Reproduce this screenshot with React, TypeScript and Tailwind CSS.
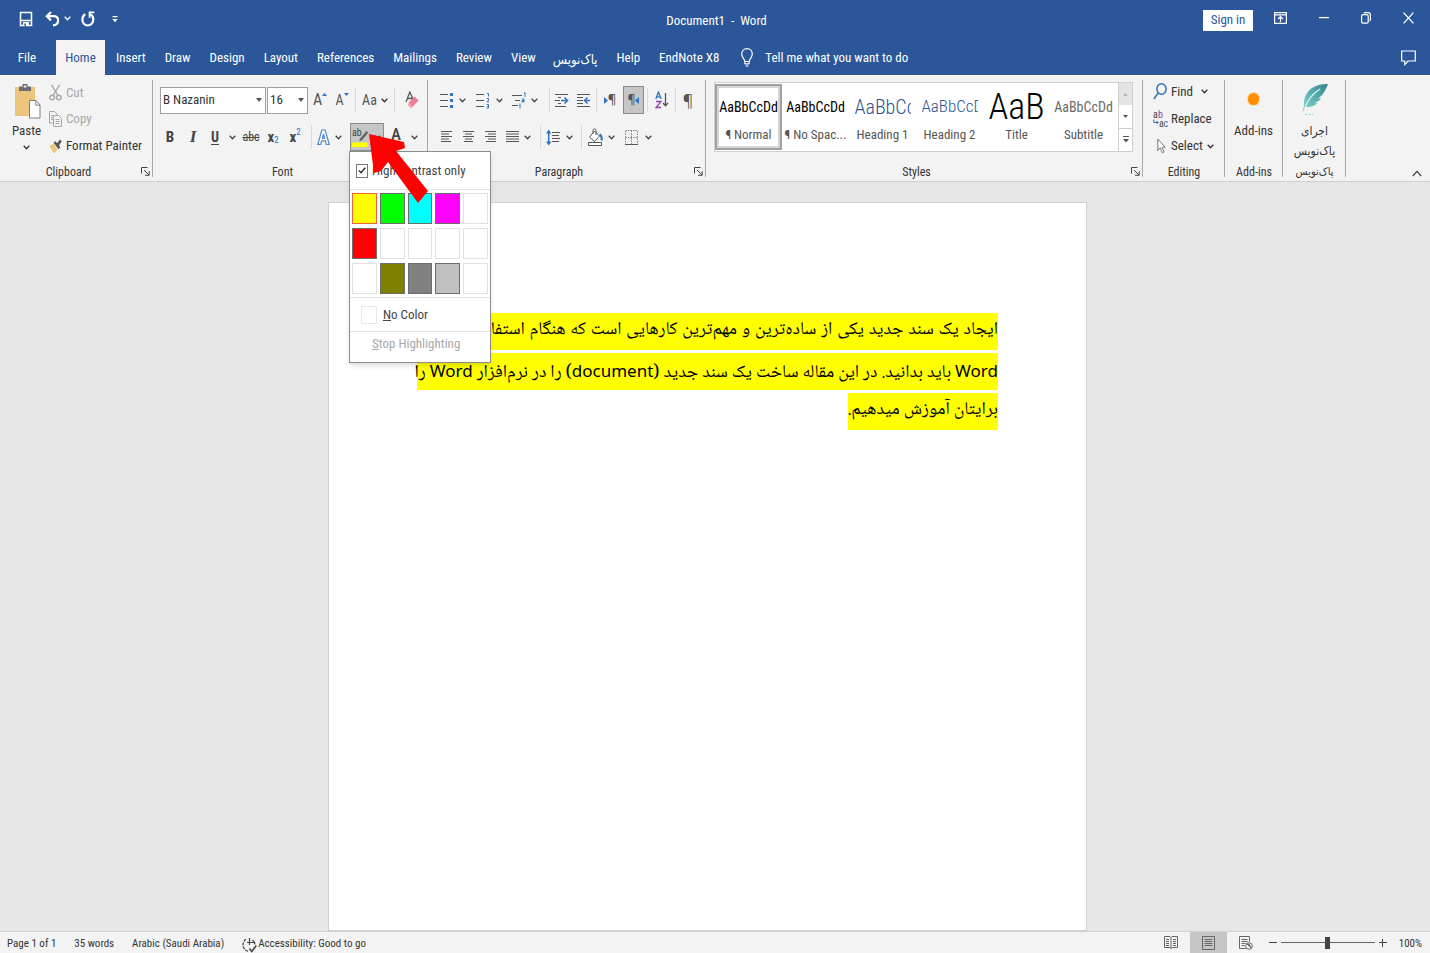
import type { ReactNode } from 'react'
import { useState } from 'react'

const tabsBefore = ['Insert', 'Draw', 'Design', 'Layout', 'References', 'Mailings', 'Review', 'View']
const tabsAfter = ['Help', 'EndNote X8']

const swatches = [
  { name: 'Yellow', color: '#ffff00', border: '#f0643c' },
  { name: 'Bright Green', color: '#00ff00', border: '#6e6e6e' },
  { name: 'Turquoise', color: '#00ffff', border: '#6e6e6e' },
  { name: 'Pink', color: '#ff00ff', border: '#6e6e6e' },
  { name: 'Blue', color: '#ffffff', border: '#e1e1e1' },
  { name: 'Red', color: '#ff0000', border: '#6e6e6e' },
  { name: 'Dark Blue', color: '#ffffff', border: '#e1e1e1' },
  { name: 'Teal', color: '#ffffff', border: '#e1e1e1' },
  { name: 'Green', color: '#ffffff', border: '#e1e1e1' },
  { name: 'Violet', color: '#ffffff', border: '#e1e1e1' },
  { name: 'Dark Red', color: '#ffffff', border: '#e1e1e1' },
  { name: 'Dark Yellow', color: '#808000', border: '#6e6e6e' },
  { name: 'Gray-50%', color: '#808080', border: '#6e6e6e' },
  { name: 'Gray-25%', color: '#c0c0c0', border: '#6e6e6e' },
  { name: 'Black', color: '#ffffff', border: '#e1e1e1' },
]

const styles = [
  { label: '¶ Normal', sample: 'AaBbCcDd', cls: 'w-full justify-center text-[14px] text-black' },
  { label: '¶ No Spac...', sample: 'AaBbCcDd', cls: 'w-full justify-center text-[14px] text-black' },
  { label: 'Heading 1', sample: 'AaBbCc', cls: 'w-14 text-[20px] font-light text-[#2f5496]' },
  { label: 'Heading 2', sample: 'AaBbCcD', cls: 'w-14 text-[17px] font-light text-[#2f5496]' },
  { label: 'Title', sample: 'AaB', cls: 'w-full justify-center text-[36px] leading-9 font-light text-black' },
  { label: 'Subtitle', sample: 'AaBbCcDd', cls: 'w-full justify-center text-[14px] text-[#6a6a6a]' },
]

function Chevron() {
  return (
    <svg width="7" height="5" viewBox="0 0 7 5" fill="none" stroke="currentColor" strokeWidth="1.3">
      <path d="M.7.8 3.5 3.7 6.3.8" />
    </svg>
  )
}

function Sep({ className = 'mx-[3px]' }: { className?: string }) {
  return <span className={`h-6 w-px shrink-0 bg-[#d8d8d8] ${className}`} />
}

function Tool({ label, className = 'w-5', children }: { label: string; className?: string; children: ReactNode }) {
  return (
    <button type="button" aria-label={label} className={`flex h-7 shrink-0 items-center justify-center ${className}`}>
      {children}
    </button>
  )
}

function Drop({ label, className = 'w-3' }: { label: string; className?: string }) {
  return (
    <Tool label={`${label} options`} className={className}>
      <Chevron />
    </Tool>
  )
}

function Group({ title, className, launcher, children, rtl }: { title: string; className: string; launcher?: boolean; children: ReactNode; rtl?: boolean }) {
  return (
    <section aria-label={title} className={`relative flex shrink-0 flex-col pt-[5px] ${className}`}>
      <div className="flex-1">{children}</div>
      <div className={`flex h-[18px] items-center justify-center text-[12px] ${launcher ? 'pr-4' : ''}`}>
        <span lang={rtl ? 'fa' : undefined} className={rtl ? "font-['DejaVu_Sans_Condensed',sans-serif] text-[11px]" : ''}>{title}</span>
      </div>
      {launcher && (
        <button type="button" aria-label={`${title} settings`} className="absolute right-[3px] bottom-[5px]">
          <svg width="9" height="9" viewBox="0 0 9 9" fill="none" stroke="#444" strokeWidth="1">
            <path d="M.5 6.5V.5h6M3 3l5 5M8.2 4v4.3H4" />
          </svg>
        </button>
      )}
      <span className="absolute top-[5px] right-0 bottom-1 w-px bg-[#a8a8a8]" />
    </section>
  )
}

function Lines({ rows }: { rows: [number, number][] }) {
  return (
    <svg width="13" height="12" viewBox="0 0 13 12" stroke="#555" strokeWidth="1">
      {rows.map(([a, b], i) => (
        <path key={i} d={`M${a} ${0.5 + i * 2.5}H${b}`} />
      ))}
    </svg>
  )
}

function TitleBar() {
  return (
    <header className="flex h-10 shrink-0 items-center text-[13px]">
      <div className="flex flex-1 items-center pb-[3px] pl-[19px]">
        <button type="button" aria-label="Save" className="flex w-[14px] justify-center">
          <svg width="14" height="16" viewBox="0 0 14 16" fill="none" stroke="#fff" strokeWidth="1.5">
            <path d="M1.5 1.5h11v13h-11zM1.5 9.5h11" />
            <path d="M4 11h6v4H4z" fill="#fff" stroke="none" />
            <path d="M5.4 12.5h1.5V15H5.4z" fill="#2b579a" stroke="none" />
          </svg>
        </button>
        <button type="button" aria-label="Undo" className="ml-3">
          <svg width="15" height="16" viewBox="0 0 15 16" fill="none" stroke="#fff" strokeWidth="2.2">
            <path d="M6 1 1.8 5.2 6 9.4M2 5.2h6.500c3 0 4.600 2 4.600 4.400 0 2.600-1.800 4.600-5.100 4.800" />
          </svg>
        </button>
        <button type="button" aria-label="Undo history" className="ml-1 text-white"><Chevron /></button>
        <button type="button" aria-label="Repeat" className="ml-[10px]">
          <svg width="14" height="16" viewBox="0 0 14 16" fill="none" stroke="#fff" strokeWidth="2.2">
            <path d="M4.300 3.200C2.300 4.200 1.400 6.200 1.400 8.600c0 3.400 2.400 5.900 5.400 5.900s5.500-2.500 5.500-5.900c0-2.600-1.200-4.600-3.200-5.400" />
            <path d="M13.300 1.400H8.600v5.400" strokeWidth="1.9" />
          </svg>
        </button>
        <button type="button" aria-label="Customize Quick Access Toolbar" className="ml-[17px]">
          <svg width="6" height="9" viewBox="0 0 6 9" fill="#fff"><path d="M.5 2h5v1.200h-5zM.3 5h5.400L3 8.200z" /></svg>
        </button>
      </div>
      <h1 className="pt-px whitespace-pre">Document1  -  Word</h1>
      <div className="flex flex-1 items-center justify-end pr-4">
        <button type="button" className="h-[21px] w-[50px] bg-white text-[13px] text-[#2b579a]">Sign in</button>
        <button type="button" aria-label="Ribbon display options" className="-mt-1 ml-[21px]">
          <svg width="13" height="12" viewBox="0 0 13 12" fill="none" stroke="#fff" strokeWidth="1.2">
            <path d="M.6.6h11.800v10.800H.6zM.6 2.800h11.800M6.500 10V4.800M4 7l2.500-2.400L9 7" />
          </svg>
        </button>
        <button type="button" aria-label="Minimize" className="-mt-1 ml-8">
          <svg width="10" height="10" viewBox="0 0 10 10" stroke="#fff" strokeWidth="1.3"><path d="M0 4.600h10" /></svg>
        </button>
        <button type="button" aria-label="Restore" className="-mt-1 ml-8">
          <svg width="10" height="12" viewBox="0 0 10 12" fill="none" stroke="#fff" strokeWidth="1.2">
            <rect x=".6" y="2.6" width="6.6" height="8.6" rx="1.4" />
            <path d="M2.600 1.200C3 .8 3.400.6 4 .6h3.400c1.200 0 2 .9 2 2.100v4.800c0 .7-.3 1.200-.8 1.500" />
          </svg>
        </button>
        <button type="button" aria-label="Close" className="-mt-1 ml-8">
          <svg width="11" height="12" viewBox="0 0 11 12" stroke="#fff" strokeWidth="1.3"><path d="m.6.6 9.800 10.800M10.400.6.6 11.400" /></svg>
        </button>
      </div>
    </header>
  )
}

function Tabs() {
  return (
    <nav className="flex h-[35px] shrink-0 items-center text-[13px]">
      <button type="button" className="h-full w-14 pr-[2px]">File</button>
      <button type="button" aria-current="page" className="mr-[2px] h-full w-[49px] bg-[#f3f3f3] text-[#2b579a]">Home</button>
      {tabsBefore.map((t) => (
        <button key={t} type="button" className="h-full pr-[10px] pl-[9px]">{t}</button>
      ))}
      <button type="button" lang="fa" className="h-full pt-1 pr-[10px] pl-[7px] font-['DejaVu_Sans_Condensed',sans-serif] text-[13px]">پاک‌نویس</button>
      {tabsAfter.map((t) => (
        <button key={t} type="button" className="h-full pr-[10px] pl-[9px]">{t}</button>
      ))}
      <button type="button" className="flex h-full items-center gap-3 pl-3">
        <svg width="12" height="19" viewBox="0 0 12 19" fill="none" stroke="#fff" strokeWidth="1.2">
          <path d="M3.800 13.500c0-2.600-3.100-4-3.100-7.400C.7 3 3 .7 6 .7s5.300 2.300 5.300 5.400c0 3.400-3.100 4.800-3.100 7.400zM3.800 15.800h4.400M4.400 18h3.200M3.800 13.500v2.300M8.200 13.500v2.300" />
        </svg>
        Tell me what you want to do
      </button>
      <button type="button" aria-label="Comments" className="mr-[14px] ml-auto">
        <svg width="15" height="16" viewBox="0 0 15 16" fill="none" stroke="#fff" strokeWidth="1.2">
          <path d="M.7 1h13.600v10H7l-3.200 3.600V11H.7z" />
        </svg>
      </button>
    </nav>
  )
}

function ClipboardGroup() {
  return (
    <Group title="Clipboard" launcher className="w-[153px]">
      <div className="flex">
        <button type="button" className="flex w-[49px] flex-col items-center pt-[3px] pl-1 text-[13px]">
          <svg width="28" height="36" viewBox="0 0 28 36">
            <path d="M2 4h20v29H2z" fill="#ecc57c" />
            <path d="M6 8V3.500h3.500V1h5v2.500H18V8z" fill="#6d6d6d" />
            <path d="M10.800 2.500h2.500v2h-2.500z" fill="#f3f3f3" />
            <path d="M16.500 17.500h6.500l4 4.500v13H16.500z" fill="#fff" stroke="#7f7f7f" />
            <path d="M22.800 17.500v4.700h4.300" fill="none" stroke="#7f7f7f" />
          </svg>
          <span className="mt-1 mb-[6px] leading-4">Paste</span>
          <Chevron />
        </button>
        <div className="flex flex-col">
          <button type="button" disabled className="flex h-[25px] items-center gap-1 text-[13px] text-[#a8a8a8]">
            <svg width="13" height="17" viewBox="0 0 13 17" fill="none" stroke="#a8a8a8" strokeWidth="1.4">
              <path d="M2.500.8 9 11.500M10.500.8 4 11.500" />
              <circle cx="3.2" cy="13.5" r="2.3" />
              <circle cx="9.8" cy="13.5" r="2.3" />
            </svg>
            Cut
          </button>
          <button type="button" disabled className="flex h-7 items-center gap-1 text-[13px] text-[#a8a8a8]">
            <svg width="13" height="16" viewBox="0 0 13 16" fill="#f3f3f3" stroke="#a8a8a8">
              <path d="M.5.5h5L8 3v9H.5zM2 4.500h3M2 6.500h3M2 8.500h3" />
              <path d="M4.500 4.500h5L12.500 7.500v8h-8zM6.500 8.500h4M6.500 10.500h4M6.500 12.500h4" />
            </svg>
            Copy
          </button>
          <button type="button" className="flex h-[26px] items-center gap-1 text-[13px]">
            <svg width="13" height="15" viewBox="0 0 13 15">
              <path d="m.3 7 4.500-2.300 4 6L5 14.500z" fill="#ecc57c" />
              <path d="m4.500 3.500 2-1.200L8 4.200l3-3.700 1.700 1.700-2.500 4 1 2.300-1.700 1.800z" fill="#555" />
            </svg>
            Format Painter
          </button>
        </div>
      </div>
    </Group>
  )
}

function HighlightMenu() {
  const [highContrast, setHighContrast] = useState(true)

  return (
    <div className="absolute top-full left-[-1px] z-10 flex w-[142px] flex-col border border-[#8c8c8c] bg-white pb-[6px] shadow-md">
      <label className="flex h-[38px] items-center gap-[5px] border-b border-[#e1e1e1] pl-[6px] text-[13px] whitespace-nowrap">
        <input
          type="checkbox"
          checked={highContrast}
          onChange={(e) => setHighContrast(e.target.checked)}
          className="peer h-[14px] w-3 appearance-none border border-[#777] bg-white"
        />
        <svg width="8" height="7" viewBox="0 0 8 7" fill="none" stroke="#222" strokeWidth="1.3" className="pointer-events-none -ml-[15px] hidden peer-checked:block">
          <path d="m.8 3.400 2.200 2.300L7.300.8" />
        </svg>
        <span className="pl-px">High-contrast only</span>
      </label>
      <div className="grid grid-cols-5 gap-x-[3px] gap-y-1 border-b border-[#e1e1e1] px-[2px] py-[3px]">
        {swatches.map((s) => (
          <button key={s.name} type="button" aria-label={s.name} className="h-[31px] border" style={{ background: s.color, borderColor: s.border }} />
        ))}
      </div>
      <button type="button" className="flex h-[34px] items-center gap-[6px] border-b border-[#e1e1e1] pl-[11px] text-[13px] text-[#444]">
        <span className="h-[18px] w-4 border border-[#e8e8e8]" />
        <span><u>N</u>o Color</span>
      </button>
      <button type="button" disabled className="h-6 pl-[22px] text-left text-[13px] text-[#a8a8a8]"><u>S</u>top Highlighting</button>
    </div>
  )
}

function FontGroup() {
  return (
    <Group title="Font" launcher className="w-[275px]">
      <div className="flex h-10 items-center pl-[7px]">
        <div className="flex h-[27px] w-[106px] items-center border border-[#a0a0a0] bg-white">
          <input aria-label="Font" defaultValue="B Nazanin" className="w-full min-w-0 pl-[2px] text-[13px] text-[#333] outline-none" />
          <svg width="6" height="4" viewBox="0 0 6 4" fill="#555" className="mr-[3px] shrink-0"><path d="M0 0h6L3 4z" /></svg>
        </div>
        <div className="ml-px flex h-[27px] w-[41px] items-center border border-[#a0a0a0] bg-white">
          <input aria-label="Font size" defaultValue="16" className="w-full min-w-0 pl-[2px] text-[13px] text-[#333] outline-none" />
          <svg width="6" height="4" viewBox="0 0 6 4" fill="#555" className="mr-[3px] shrink-0"><path d="M0 0h6L3 4z" /></svg>
        </div>
        <Tool label="Increase font size" className="w-6">
          <span className="text-[16px] text-[#555]">A</span>
          <svg width="5" height="3" viewBox="0 0 5 3" fill="#2e74c0" className="mb-3"><path d="M0 3h5L2.500 0z" /></svg>
        </Tool>
        <Tool label="Decrease font size" className="w-5">
          <span className="text-[14px] text-[#555]">A</span>
          <svg width="5" height="3" viewBox="0 0 5 3" fill="#2e74c0" className="mb-3"><path d="M0 0h5L2.500 3z" /></svg>
        </Tool>
        <Sep />
        <Tool label="Change case" className="w-8 gap-1">
          <span className="text-[14px] text-[#555]">Aa</span>
          <Chevron />
        </Tool>
        <Sep />
        <Tool label="Clear formatting" className="w-7">
          <svg width="15" height="18" viewBox="0 0 15 18" fill="none">
            <path d="M1 11 4.800 1 8 8M2.500 7.500H7" stroke="#555" strokeWidth="1.3" />
            <path d="m9.500 5.500 4 4-6 6.500-4-4z" fill="#ea7f93" />
            <path d="m3.500 12 4 4-1.500 1.500-3.500-3.500z" fill="#f3a9b6" />
          </svg>
        </Tool>
      </div>
      <div className="flex h-[34px] items-center pl-[6px] text-[#444]">
        <Tool label="Bold" className="w-[22px]"><b className="text-[15px]">B</b></Tool>
        <Tool label="Italic" className="w-6"><i className="font-['Liberation_Serif',serif] text-[17px] font-bold">I</i></Tool>
        <Tool label="Underline" className="w-5"><u className="text-[14px] font-bold underline-offset-2">U</u></Tool>
        <Drop label="Underline" className="w-[14px]" />
        <Tool label="Strikethrough" className="w-6"><s className="text-[12px]">abc</s></Tool>
        <Tool label="Subscript"><b className="text-[15px]">x</b><span className="mt-2 text-[9px] text-[#2e74c0]">2</span></Tool>
        <Tool label="Superscript" className="w-6"><b className="text-[15px]">x</b><span className="mb-2 text-[9px] text-[#2e74c0]">2</span></Tool>
        <Sep className="mr-[3px] ml-1" />
        <Tool label="Text effects" className="w-4">
          <svg width="13" height="17" viewBox="0 0 13 17" fill="#fff" stroke="#4a8bd0" strokeWidth="1.2">
            <path d="M4.800 1h3.400l4 14.500H9.300l-1-3.600H4.700l-1 3.600H.8zM5.400 9.300h2.200L6.500 5z" />
          </svg>
        </Tool>
        <Drop label="Text effects" className="w-[14px]" />
        <div className="relative ml-[5px]">
          <button type="button" aria-label="Text highlight color" aria-expanded="true" className="flex h-7 w-[34px] items-center gap-1 border border-[#8c8c8c] bg-[#c6c6c6] pl-px">
            <svg width="18" height="21" viewBox="0 0 18 21">
              <text x="0" y="9" fontSize="10" fill="#444" fontFamily="Roboto Condensed">ab</text>
              <path d="m14.500 4 1.800 1.500-6.500 8-2.500.7.600-2.500z" fill="#666" />
              <path d="M0 15.500h15.500V20H0z" fill="#ff0" />
            </svg>
            <Chevron />
          </button>
          <HighlightMenu />
          <svg width="60" height="72" viewBox="0 0 60 72" className="pointer-events-none absolute top-[11px] left-[19px] z-20" fill="#f00">
            <path d="M0 0 35 8 36 14 27 17 59 57 49 69 19 28 12 37 5 39z" />
          </svg>
        </div>
        <Tool label="Font color" className="w-6">
          <span className="pb-1 text-[17px] font-medium">A</span>
        </Tool>
        <Drop label="Font color" />
      </div>
    </Group>
  )
}

function ParagraphGroup() {
  return (
    <Group title="Paragraph" launcher className="w-[278px]">
      <div className="flex h-10 items-center pl-2 text-[#444]">
        <Tool label="Bullets">
          <svg width="13" height="17" viewBox="0 0 13 17" stroke="#555">
            <path d="M0 2.500h8M0 8.500h8M0 14.500h8" />
            <path d="M10 1h3v3h-3zM10 7h3v3h-3zM10 13h3v3h-3z" fill="#2e74c0" stroke="none" />
          </svg>
        </Tool>
        <Drop label="Bullets" />
        <Tool label="Numbering" className="ml-[5px] w-5">
          <svg width="14" height="17" viewBox="0 0 14 17" stroke="#555" fill="none">
            <path d="M0 2.500h8M0 8.500h8M0 14.500h8" />
            <path d="M11 1.500h1.500v3M10.800 6.500h1.700v1.700l-1.500 1.600h2M10.800 12.500h1.700v3.500h-1.900M11 14.300h1.500" stroke="#2e74c0" />
          </svg>
        </Tool>
        <Drop label="Numbering" />
        <Tool label="Multilevel list" className="ml-1 w-5">
          <svg width="14" height="17" viewBox="0 0 14 17" stroke="#555" fill="none">
            <path d="M0 3.500h10M3 8.500h5M0 13.500h6" />
            <path d="M12 .8h1v4M10 7h2v3h-2V8.500h2M8 11.500v5" stroke="#2e74c0" />
          </svg>
        </Tool>
        <Drop label="Multilevel list" className="w-[10px]" />
        <Sep className="mr-0 ml-[10px]" />
        <Tool label="Decrease indent" className="w-[22px]">
          <svg width="15" height="15" viewBox="0 0 15 15" stroke="#555" fill="none">
            <path d="M1 1.500h13M4 4.500h3M1 7.500h5M4 10.500h3M1 13.500h11" />
            <path d="M7 7.500h6M10.500 4.500l3 3-3 3" stroke="#2e74c0" strokeWidth="1.5" />
          </svg>
        </Tool>
        <Tool label="Increase indent" className="w-[22px]">
          <svg width="15" height="15" viewBox="0 0 15 15" stroke="#555" fill="none">
            <path d="M1 1.500h13M1 4.500h6M1 7.500h6M1 10.500h6M1 13.500h13" />
            <path d="M14 7.500H8.500M11.500 4.500l-3 3 3 3" stroke="#2e74c0" strokeWidth="1.5" />
          </svg>
        </Tool>
        <Sep className="mx-[2px]" />
        <Tool label="Left-to-right" className="w-[22px] text-[#555]">
          <svg width="4" height="7" viewBox="0 0 4 7" fill="#2e74c0"><path d="M0 0v7l4-3.500z" /></svg>
          <span className="font-['Open_Sans',sans-serif] text-[13px] font-semibold">¶</span>
        </Tool>
        <Tool label="Right-to-left" className="ml-[2px] w-[21px] border border-[#8c8c8c] bg-[#c6c6c6] text-[#555]">
          <span className="font-['Open_Sans',sans-serif] text-[12px] font-semibold">¶</span>
          <svg width="4" height="7" viewBox="0 0 4 7" fill="#2e74c0"><path d="M4 0v7L0 3.500z" /></svg>
        </Tool>
        <Sep className="mx-[3px]" />
        <Tool label="Sort" className="w-[22px]">
          <svg width="14" height="18" viewBox="0 0 14 18" fill="none" strokeWidth="1.3">
            <path d="M.8 8 3.500 1l2.700 7M1.700 5.800h3.600" stroke="#2e74c0" />
            <path d="M1 10.500h5L1 16.500h5" stroke="#8b44ac" />
            <path d="M10.500 2v12.500M8 12l2.500 2.800L13 12" stroke="#555" />
          </svg>
        </Tool>
        <Sep className="mx-[2px]" />
        <Tool label="Show paragraph marks"><span className="font-['Open_Sans',sans-serif] text-[16px] text-[#555]">¶</span></Tool>
      </div>
      <div className="flex h-[34px] items-center pl-2 text-[#444]">
        <Tool label="Align left"><Lines rows={[[1, 12], [1, 9], [1, 12], [1, 9], [1, 11]]} /></Tool>
        <Tool label="Center" className="ml-[2px] w-5"><Lines rows={[[1, 12], [3, 10], [1, 12], [3, 10], [2, 11]]} /></Tool>
        <Tool label="Align right" className="ml-[2px] w-5"><Lines rows={[[1, 12], [4, 12], [1, 12], [4, 12], [2, 12]]} /></Tool>
        <Tool label="Justify" className="ml-[2px] w-5"><Lines rows={[[0, 13], [0, 13], [0, 13], [0, 13], [0, 13]]} /></Tool>
        <Drop label="Justify" className="w-[10px]" />
        <Sep className="mr-0 ml-2" />
        <Tool label="Line spacing" className="ml-[2px] w-5">
          <svg width="14" height="17" viewBox="0 0 14 17" fill="none" stroke="#555">
            <path d="M6 3.500h8M6 6.500h7M6 9.500h8M6 12.500h7" />
            <path d="M2.700 2v13" stroke="#2e74c0" strokeWidth="1.5" />
            <path d="M0 4.500 2.700.5l2.700 4zM0 12.500l2.700 4 2.700-4z" fill="#2e74c0" stroke="none" />
          </svg>
        </Tool>
        <Drop label="Line spacing" />
        <Sep className="mr-[3px] ml-[6px]" />
        <Tool label="Shading">
          <svg width="15" height="18" viewBox="0 0 15 18" fill="none" stroke="#555">
            <path d="m1.500 9 5-6 5 5-5 5.500zM5 5.500V2.500C5 .3 8 .3 8 2.500V7" fill="#fff" />
            <path d="M11.500 6.500c2 1 2.500 3 2 6" stroke="#2e74c0" strokeWidth="2" />
            <path d="M.5 14.500h13v3H.5z" fill="#fff" />
          </svg>
        </Tool>
        <Drop label="Shading" />
        <Tool label="Borders" className="ml-1 w-5">
          <svg width="13" height="15" viewBox="0 0 13 15" fill="none" stroke="#888">
            <path d="M.5.5h12v14H.5zM6.500.5v14M.5 7.500h12" strokeDasharray="1.5 1" />
            <path d="M0 14.500h13" stroke="#555" />
          </svg>
        </Tool>
        <Drop label="Borders" className="w-[14px]" />
      </div>
    </Group>
  )
}

function StylesGroup() {
  return (
    <Group title="Styles" launcher className="w-[437px]">
      <div className="mt-[2px] mr-[10px] ml-2 flex h-[70px] border border-[#d0d0d0] bg-white">
        {styles.map((s, i) => (
          <button
            key={s.label}
            type="button"
            className={`flex w-[67px] shrink-0 flex-col items-center overflow-hidden border-2 ${i === 0 ? 'my-px border-[#a0a0a0] pt-[3px] ring-2 ring-[#d6d6d6] ring-inset' : 'border-transparent pt-1'}`}
          >
            <span className={`flex h-9 items-center overflow-hidden whitespace-nowrap ${s.cls}`}>{s.sample}</span>
            <span className="text-[13px] leading-5 whitespace-nowrap text-[#555]">{s.label}</span>
          </button>
        ))}
        <div className="ml-auto flex w-[14px] flex-col border-l border-[#d0d0d0]">
          <button type="button" aria-label="Previous styles" className="flex flex-1 items-center justify-center bg-[#e3e3e3]">
            <svg width="5" height="3" viewBox="0 0 5 3" fill="#b5b5b5"><path d="M0 3h5L2.500 0z" /></svg>
          </button>
          <button type="button" aria-label="Next styles" className="flex flex-1 items-center justify-center border-b border-[#d0d0d0]">
            <svg width="5" height="3" viewBox="0 0 5 3" fill="#555"><path d="M0 0h5L2.500 3z" /></svg>
          </button>
          <button type="button" aria-label="More styles" className="flex flex-1 items-center justify-center">
            <svg width="6" height="7" viewBox="0 0 6 7" fill="#555"><path d="M0 0h6v1H0zM0 3h6L3 6.500z" /></svg>
          </button>
        </div>
      </div>
    </Group>
  )
}

function EditingGroup() {
  return (
    <Group title="Editing" className="w-[82px]">
      <div className="flex flex-col items-start pl-[10px] text-[13px]">
        <button type="button" className="flex h-[23px] items-center gap-1">
          <svg width="14" height="17" viewBox="0 0 14 17" fill="none" stroke="#2e74c0" strokeWidth="1.5">
            <ellipse cx="8.5" cy="6" rx="4.6" ry="5.2" />
            <path d="M5.200 10 .8 16" />
          </svg>
          Find
          <span className="ml-1"><Chevron /></span>
        </button>
        <button type="button" className="flex h-8 items-center gap-[3px]">
          <svg width="15" height="18" viewBox="0 0 15 18" fontSize="10" fontFamily="Roboto Condensed">
            <text x="0" y="8" fill="#444">a</text>
            <text x="5" y="8" fill="#8b44ac">b</text>
            <text x="6" y="17" fill="#444">a</text>
            <text x="10.500" y="17" fill="#2e74c0">c</text>
            <path d="M.8 9.500v3H5M3.500 10.800 5.200 12.500 3.500 14.200" fill="none" stroke="#2e74c0" />
          </svg>
          Replace
        </button>
        <button type="button" className="flex h-[22px] items-center gap-1 pl-1">
          <svg width="10" height="16" viewBox="0 0 10 16" fill="#fff" stroke="#777">
            <path d="M.8 1v11.500l2.500-2.700 2 5 1.800-.9-2-4.700h3.100z" />
          </svg>
          Select
          <Chevron />
        </button>
      </div>
    </Group>
  )
}

function AddInGroups() {
  return (
    <>
      <Group title="Add-ins" className="w-[58px]">
        <button type="button" className="flex w-full flex-col items-center pr-px text-[13px]">
          <span className="mt-[13px] mb-4 h-3 w-[11px] rounded-full bg-[#ff8f00] ring-1 ring-[#ffd9a3]" />
          Add-ins
        </button>
      </Group>
      <Group title="پاک‌نویس" rtl className="w-[63px]">
        <button type="button" lang="fa" className="flex w-full flex-col items-center font-['DejaVu_Sans_Condensed',sans-serif] text-[12px] leading-5">
          <svg width="28" height="33" viewBox="0 0 28 33" className="mt-[3px] mb-[5px]">
            <defs>
              <linearGradient id="feather" x1="1" y1="0" x2="0" y2="1">
                <stop offset="0" stopColor="#35828f" />
                <stop offset="1" stopColor="#7fdccf" />
              </linearGradient>
            </defs>
            <path d="M27 1C17 .5 8 5 5 12c-2 4-2.500 8-2 11l-1.500 5h1l2-4c5 .5 9-1 12-4l-4 .3c3-.8 6-2.500 7.500-5l-3 .2C21 13 24 9 27 1z" fill="url(#feather)" />
            <path d="M3.500 26C6 18 11 11 19 6" fill="none" stroke="#e5f7f5" strokeWidth="1.1" />
            <path d="M4 31.500h8" stroke="#7fdccf" strokeDasharray="2 1.5" />
          </svg>
          <span>اجرای</span>
          <span>پاک‌نویس</span>
        </button>
      </Group>
    </>
  )
}

function Ribbon() {
  return (
    <div className="flex h-[107px] shrink-0 border-b border-[#d0d0d0] bg-[#f3f3f3] text-[#333]">
      <ClipboardGroup />
      <FontGroup />
      <ParagraphGroup />
      <StylesGroup />
      <EditingGroup />
      <AddInGroups />
      <button type="button" aria-label="Collapse the ribbon" className="mr-2 mb-1 ml-auto self-end">
        <svg width="10" height="7" viewBox="0 0 10 7" fill="none" stroke="#444" strokeWidth="1.3"><path d="m.8 6 4.200-4.600L9.200 6" /></svg>
      </button>
    </div>
  )
}

function Latin({ children }: { children: ReactNode }) {
  return <span lang="en" className="font-['Noto_Sans',sans-serif] text-[17px]">{children}</span>
}

function Document() {
  return (
    <main className="flex min-h-0 flex-1 justify-center overflow-hidden bg-[#e6e6e6] pt-5 pr-[15px]">
      <article dir="rtl" lang="fa" className="w-[759px] border border-[#d0d0d0] bg-white px-[88px] pt-[110px] font-['Noto_Naskh_Arabic',serif] text-[18px] leading-[35px] text-black">
        <p className="flex flex-col items-start gap-[3px]">
          <span className="h-[37px] w-full bg-[#ff0] whitespace-nowrap [text-align-last:justify]">ایجاد یک سند جدید یکی از ساده‌ترین و مهم‌ترین کارهایی است که هنگام استفاده از برنامه</span>
          <span className="h-[37px] w-full bg-[#ff0] whitespace-nowrap [text-align-last:justify]"><Latin>Word</Latin> باید بدانید. در این مقاله ساخت یک سند جدید (<Latin>document</Latin>) را در نرم‌افزار <Latin>Word</Latin> را</span>
          <span className="h-[37px] bg-[#ff0] whitespace-nowrap">برایتان آموزش میدهیم.</span>
        </p>
      </article>
    </main>
  )
}

function StatusBar() {
  const [zoom, setZoom] = useState(50)

  return (
    <footer className="flex h-[22px] shrink-0 items-center border-t border-[#d0d0d0] bg-[#f3f3f3] pl-[7px] text-[11px] text-[#333]">
      <span className="pt-1">Page 1 of 1</span>
      <span className="ml-[18px] pt-1">35 words</span>
      <span className="ml-[18px] pt-1">Arabic (Saudi Arabia)</span>
      <button type="button" className="ml-[18px] flex items-center gap-px pt-1">
        <svg width="15" height="16" viewBox="0 0 15 16" fill="none" stroke="#444" strokeWidth="1.2">
          <path d="M6 14.200C3 13.500 1 11 1 8c0-2.500 1.200-4.500 3-5.700" strokeDasharray="3 1" />
          <path d="M7.500 1v7M5 5.500h7.500M10.500 3c1.500 1 2.300 2.500 2.500 4.500" />
          <path d="m7.500 11.500 2.300 3 4.500-6" strokeWidth="1.6" />
        </svg>
        Accessibility: Good to go
      </button>
      <div className="ml-auto flex h-full items-center pr-2">
        <button type="button" aria-label="Read mode" className="mr-3">
          <svg width="14" height="13" viewBox="0 0 14 13" fill="none" stroke="#666">
            <path d="M.5.5h5.500l1 1 1-1h5.500v11H8l-1 1-1-1H.5zM7 1.500v11M2 3.500h3M2 5.500h3M2 7.500h3M2 9.500h3M9 3.500h3M9 5.500h3M9 7.500h3M9 9.500h3" />
          </svg>
        </button>
        <button type="button" aria-label="Print layout" className="flex h-full w-[37px] items-center justify-center bg-[#c6c6c6]">
          <svg width="13" height="14" viewBox="0 0 13 14" fill="none" stroke="#666">
            <path d="M.5.5h12v13H.5zM2.500 3.500h8M2.500 5.500h8M2.500 7.500h8M2.500 9.500h8" />
          </svg>
        </button>
        <button type="button" aria-label="Web layout" className="ml-3">
          <svg width="14" height="14" viewBox="0 0 14 14" fill="none" stroke="#666">
            <path d="M7 12.500H.5V.5h10v5M2.500 3.500h6M2.500 5.500h6M2.500 7.500h4M2.500 9.500h3" />
            <circle cx="10" cy="10" r="3.3" fill="#fff" />
            <path d="m8 8 4 4-2-4z" fill="#666" />
          </svg>
        </button>
        <button type="button" aria-label="Zoom out" className="ml-4 w-2">
          <svg width="8" height="8" viewBox="0 0 8 8" stroke="#444"><path d="M0 3.500h8" /></svg>
        </button>
        <input
          type="range"
          aria-label="Zoom"
          value={zoom}
          onChange={(e) => setZoom(Number(e.target.value))}
          className="mx-1 h-3 w-[94px] appearance-none bg-[linear-gradient(#666,#666)] bg-[length:100%_1px] bg-center bg-no-repeat [&::-webkit-slider-thumb]:h-3 [&::-webkit-slider-thumb]:w-[5px] [&::-webkit-slider-thumb]:appearance-none [&::-webkit-slider-thumb]:bg-[#444]"
        />
        <button type="button" aria-label="Zoom in" className="w-2">
          <svg width="8" height="8" viewBox="0 0 8 8" stroke="#444"><path d="M0 3.500h8M3.500 0v8" /></svg>
        </button>
        <span className="ml-3 pt-1">100%</span>
      </div>
    </footer>
  )
}

export default function App() {
  return (
    <div className="flex h-screen flex-col overflow-hidden font-['Roboto_Condensed',Roboto,sans-serif]">
      <div className="flex flex-col bg-[#2b579a] text-white">
        <TitleBar />
        <Tabs />
      </div>
      <Ribbon />
      <Document />
      <StatusBar />
    </div>
  )
}
